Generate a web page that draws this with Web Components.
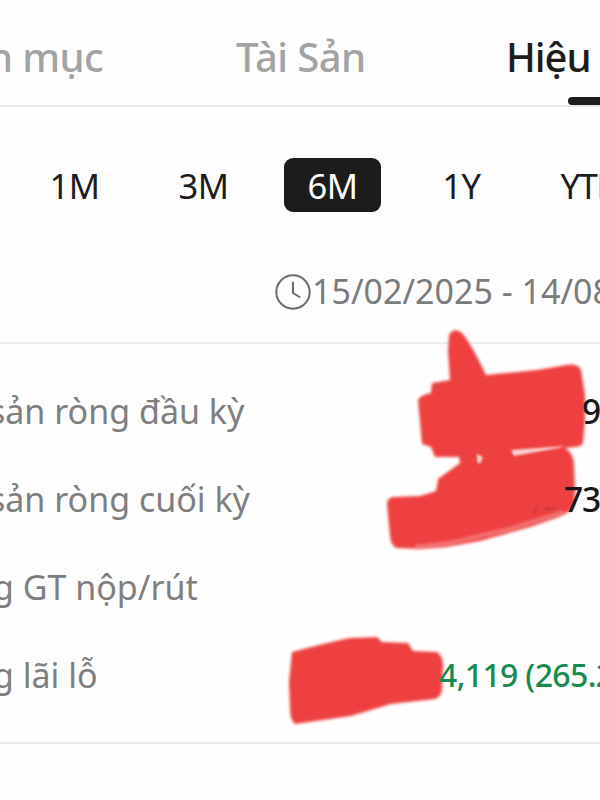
<!DOCTYPE html>
<html lang="vi"><head><meta charset="utf-8"><title>Hiệu suất</title>
<style>
html,body{margin:0;background:#fefefe}
body{width:600px;height:800px;overflow:hidden;font-family:"Noto Sans","Open Sans",sans-serif}
</style></head><body>
<performance-screen></performance-screen>
<script>
const define=(name,html)=>customElements.define(name,class extends HTMLElement{
  constructor(){super();this.attachShadow({mode:'open'}).innerHTML=html;}
});
define('tab-item',`<style>
:host{display:block;box-sizing:border-box;height:105px;line-height:113px;font-size:40px;letter-spacing:-.6px;font-weight:500;color:#a3a3a3;white-space:nowrap;position:relative}
:host([active]){color:#1c1c1c;letter-spacing:-1.1px}
i{display:none}
:host([active]) i{display:block;position:absolute;left:62px;bottom:0;width:120px;height:8px;border-radius:4px;background:#1c1c1c}
</style><slot></slot><i></i>`);
define('tab-bar',`<style>
:host{display:grid;grid-template-columns:236px 270px 1fr;height:105px;border-bottom:2px solid #e8e8e8}
</style><slot></slot>`);
define('range-chip',`<style>
:host{display:flex;align-items:center;justify-content:center;box-sizing:border-box;width:97px;height:54px;border-radius:9px;font-size:34.5px;letter-spacing:-.5px;color:#1c1c1c;flex:none;white-space:nowrap}
:host([selected]){background:#1c1c1c;color:#fff}
</style><slot></slot>`);
define('range-picker',`<style>
:host{display:flex;gap:32px;padding:51px 0 0 26px;height:54px}
</style><slot></slot>`);
define('date-range',`<style>
:host{display:flex;align-items:center;height:48px;margin-top:54px;padding-left:274px;font-size:34px;color:#7b7b7b;white-space:nowrap}
svg{width:38px;height:38px;flex:none;margin-top:4px}
span{margin-top:2px}
</style><svg viewBox="0 0 38 38" fill="none" stroke="#666c72" stroke-width="2" stroke-linecap="round" stroke-linejoin="round"><circle cx="19" cy="19" r="16.7"/><path d="M19 9.5V20l6.5 4"/></svg><span><slot></slot></span>`);
define('stat-row',`<style>
:host{display:flex;height:88px;line-height:88px;font-size:34px;color:#7f7f7f;white-space:nowrap}
.label{width:var(--value-start,440px);flex:none}
.label span{margin-left:var(--shift,0px)}
.value{position:relative;z-index:2;color:#181818;font-size:33.5px;letter-spacing:-1.2px;font-weight:500}
:host([gain]) .value{color:#168b4e;font-size:32px;letter-spacing:-.65px}
</style><div class="label"><span><slot></slot></span></div><div class="value"><slot name="value"></slot></div>`);
define('stat-list',`<style>
:host{display:block;margin-top:28px;height:400px;padding-top:23px;box-sizing:border-box;border-top:2px solid #eee}
</style><slot></slot>`);
define('ink-marks',`<style>
:host{position:absolute;inset:0;width:600px;height:800px;z-index:1;pointer-events:none}
svg{display:block}
</style><svg width="600" height="800" viewBox="0 0 600 800">
<defs><filter id="soft" x="-5%" y="-5%" width="110%" height="110%"><feGaussianBlur stdDeviation="1.7"/></filter>
<filter id="fine" x="-20%" y="-20%" width="140%" height="140%"><feGaussianBlur stdDeviation=".8"/></filter></defs>
<g fill="#ee413f" filter="url(#soft)">
<path d="M449 335Q454 326 463 334Q474 349 486 375L537 370L566 365Q578 363 581 370L585 395L585 420L583 443Q582 446 576 447L565 448Q574 453 574 466L575 490L574 506Q569 513 559 517L530 527L480 541L446 547L420 549L397 548Q391 546 390 536L387 504Q387 498 393 497L420 496L436 491L438 479L460 463L459 457L435 457L431 447L422 444L418 400Q420 395 431 393L432 383L450 380L448 351Z"/>
<path d="M292 652L323 644L349 638L377 637L382 642L408 643L413 651L437 652Q442 655 443 664L442 690Q441 697 435 699L391 704L351 716L309 722L295 724Q290 720 290 708L289 682Z"/>
</g>
<g fill="#fff" filter="url(#fine)" opacity=".75"><path d="M477 454L483 457L480 464L477 462Z"/><path d="M511 450L565 446L559 448L514 456Z"/></g>
<path d="M415 547L450 543L510 529L564 512" fill="none" stroke="#fff" stroke-width="4" opacity=".28" filter="url(#soft)"/>
<path d="M537 507L534 514M545 508Q551 511 556 506" fill="none" stroke="#7b2925" stroke-width="1.5" opacity=".5" filter="url(#fine)"/>
</svg>`);
define('performance-screen',`<style>
:host{display:block;position:relative;width:600px;height:800px;overflow:hidden;background:#fefefe}
.foot{height:2px;background:#eaeaea}
.cut{margin-left:-12px}
</style>
<tab-bar><tab-item><span class="cut">h mục</span></tab-item><tab-item>Tài Sản</tab-item><tab-item active>Hiệu</tab-item></tab-bar>
<range-picker><range-chip>1M</range-chip><range-chip>3M</range-chip><range-chip selected>6M</range-chip><range-chip>1Y</range-chip><range-chip style="letter-spacing:-1.3px">YTD</range-chip></range-picker>
<date-range>15/02/2025 - 14/08</date-range>
<stat-list>
<stat-row style="--shift:-11px;--value-start:582px">sản ròng đầu kỳ<span slot="value">9</span></stat-row>
<stat-row style="--shift:-11px;--value-start:564px">sản ròng cuối kỳ<span slot="value">73</span></stat-row>
<stat-row style="--shift:-7px">g GT nộp/rút</stat-row>
<stat-row gain style="--shift:-7px;--value-start:439px">g lãi lỗ<span slot="value">4,119 (265.2</span></stat-row>
</stat-list><div class="foot"></div>
<ink-marks></ink-marks>`);
</script></body></html>
